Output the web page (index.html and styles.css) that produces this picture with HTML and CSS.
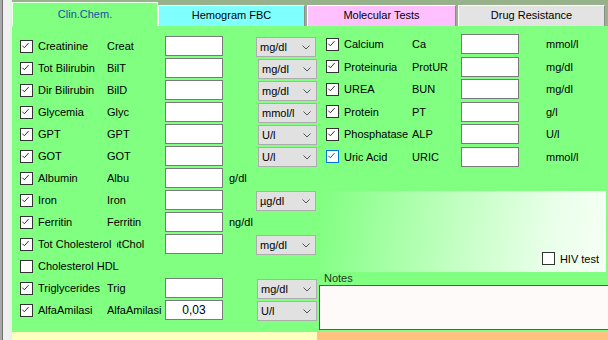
FILE: index.html
```html
<!DOCTYPE html>
<html lang="en">
<head>
    <meta charset="UTF-8">
    <meta name="viewport" content="width=device-width, initial-scale=1.0">
    <title>Clinical Chemistry</title>
    <link rel="stylesheet" href="styles.css">
</head>
<body>
    <div class="window">
        <div class="tabs">
            <div class="tab active">Clin.Chem.</div>
            <div class="tab hemo">Hemogram FBC</div>
            <div class="tab mol">Molecular Tests</div>
            <div class="tab drug">Drug Resistance</div>
        </div>

        <div class="panel">
            <!-- left column of tests -->
            <div class="col-left">
                <div class="row">
                    <label class="chk"><span class="cb"><svg viewBox="0 0 13 13"><polyline points="2.5,6.5 5,9 10,3.5"/></svg></span>Creatinine</label>
                    <span class="abbr">Creat</span>
                    <input class="box" type="text">
                    <div class="combo c33"><span>mg/dl</span><svg viewBox="0 0 8 5"><polyline points="0.5,0.5 4,4 7.5,0.5"/></svg></div>
                </div>
                <div class="row">
                    <label class="chk"><span class="cb"><svg viewBox="0 0 13 13"><polyline points="2.5,6.5 5,9 10,3.5"/></svg></span>Tot Bilirubin</label>
                    <span class="abbr">BilT</span>
                    <input class="box" type="text">
                    <div class="combo c35"><span>mg/dl</span><svg viewBox="0 0 8 5"><polyline points="0.5,0.5 4,4 7.5,0.5"/></svg></div>
                </div>
                <div class="row">
                    <label class="chk"><span class="cb"><svg viewBox="0 0 13 13"><polyline points="2.5,6.5 5,9 10,3.5"/></svg></span>Dir Bilirubin</label>
                    <span class="abbr">BilD</span>
                    <input class="box" type="text">
                    <div class="combo c35"><span>mg/dl</span><svg viewBox="0 0 8 5"><polyline points="0.5,0.5 4,4 7.5,0.5"/></svg></div>
                </div>
                <div class="row">
                    <label class="chk"><span class="cb"><svg viewBox="0 0 13 13"><polyline points="2.5,6.5 5,9 10,3.5"/></svg></span>Glycemia</label>
                    <span class="abbr">Glyc</span>
                    <input class="box" type="text">
                    <div class="combo c35"><span>mmol/l</span><svg viewBox="0 0 8 5"><polyline points="0.5,0.5 4,4 7.5,0.5"/></svg></div>
                </div>
                <div class="row">
                    <label class="chk"><span class="cb"><svg viewBox="0 0 13 13"><polyline points="2.5,6.5 5,9 10,3.5"/></svg></span>GPT</label>
                    <span class="abbr">GPT</span>
                    <input class="box" type="text">
                    <div class="combo c35"><span>U/l</span><svg viewBox="0 0 8 5"><polyline points="0.5,0.5 4,4 7.5,0.5"/></svg></div>
                </div>
                <div class="row">
                    <label class="chk"><span class="cb"><svg viewBox="0 0 13 13"><polyline points="2.5,6.5 5,9 10,3.5"/></svg></span>GOT</label>
                    <span class="abbr">GOT</span>
                    <input class="box" type="text">
                    <div class="combo c35"><span>U/l</span><svg viewBox="0 0 8 5"><polyline points="0.5,0.5 4,4 7.5,0.5"/></svg></div>
                </div>
                <div class="row">
                    <label class="chk"><span class="cb"><svg viewBox="0 0 13 13"><polyline points="2.5,6.5 5,9 10,3.5"/></svg></span>Albumin</label>
                    <span class="abbr">Albu</span>
                    <input class="box" type="text">
                    <span class="unit">g/dl</span>
                </div>
                <div class="row">
                    <label class="chk"><span class="cb"><svg viewBox="0 0 13 13"><polyline points="2.5,6.5 5,9 10,3.5"/></svg></span>Iron</label>
                    <span class="abbr">Iron</span>
                    <input class="box" type="text">
                    <div class="combo c33"><span>µg/dl</span><svg viewBox="0 0 8 5"><polyline points="0.5,0.5 4,4 7.5,0.5"/></svg></div>
                </div>
                <div class="row">
                    <label class="chk"><span class="cb"><svg viewBox="0 0 13 13"><polyline points="2.5,6.5 5,9 10,3.5"/></svg></span>Ferritin</label>
                    <span class="abbr">Ferritin</span>
                    <input class="box" type="text">
                    <span class="unit">ng/dl</span>
                </div>
                <div class="row">
                    <label class="chk"><span class="cb"><svg viewBox="0 0 13 13"><polyline points="2.5,6.5 5,9 10,3.5"/></svg></span>Tot Cholesterol</label>
                    <span class="abbr hidden-start">TotChol</span>
                    <input class="box" type="text">
                    <div class="combo c33"><span>mg/dl</span><svg viewBox="0 0 8 5"><polyline points="0.5,0.5 4,4 7.5,0.5"/></svg></div>
                </div>
                <div class="row">
                    <label class="chk wide"><span class="cb"></span>Cholesterol HDL</label>
                </div>
                <div class="row">
                    <label class="chk"><span class="cb"><svg viewBox="0 0 13 13"><polyline points="2.5,6.5 5,9 10,3.5"/></svg></span>Triglycerides</label>
                    <span class="abbr">Trig</span>
                    <input class="box" type="text">
                    <div class="combo c34"><span>mg/dl</span><svg viewBox="0 0 8 5"><polyline points="0.5,0.5 4,4 7.5,0.5"/></svg></div>
                </div>
                <div class="row">
                    <label class="chk"><span class="cb"><svg viewBox="0 0 13 13"><polyline points="2.5,6.5 5,9 10,3.5"/></svg></span>AlfaAmilasi</label>
                    <span class="abbr">AlfaAmilasi</span>
                    <input class="box" type="text" value="0,03">
                    <div class="combo c34"><span>U/l</span><svg viewBox="0 0 8 5"><polyline points="0.5,0.5 4,4 7.5,0.5"/></svg></div>
                </div>
            </div>

            <!-- right column -->
            <div class="col-right">
                <div class="rows-right">
                    <div class="row-r">
                        <label class="chk"><span class="cb"><svg viewBox="0 0 13 13"><polyline points="2.5,6.5 5,9 10,3.5"/></svg></span>Calcium</label>
                        <span class="abbr">Ca</span>
                        <input class="box" type="text">
                        <span class="unit-r">mmol/l</span>
                    </div>
                    <div class="row-r">
                        <label class="chk"><span class="cb"><svg viewBox="0 0 13 13"><polyline points="2.5,6.5 5,9 10,3.5"/></svg></span>Proteinuria</label>
                        <span class="abbr">ProtUR</span>
                        <input class="box" type="text">
                        <span class="unit-r">mg/dl</span>
                    </div>
                    <div class="row-r">
                        <label class="chk"><span class="cb"><svg viewBox="0 0 13 13"><polyline points="2.5,6.5 5,9 10,3.5"/></svg></span>UREA</label>
                        <span class="abbr">BUN</span>
                        <input class="box" type="text">
                        <span class="unit-r">mg/dl</span>
                    </div>
                    <div class="row-r">
                        <label class="chk"><span class="cb"><svg viewBox="0 0 13 13"><polyline points="2.5,6.5 5,9 10,3.5"/></svg></span>Protein</label>
                        <span class="abbr">PT</span>
                        <input class="box" type="text">
                        <span class="unit-r">g/l</span>
                    </div>
                    <div class="row-r">
                        <label class="chk"><span class="cb"><svg viewBox="0 0 13 13"><polyline points="2.5,6.5 5,9 10,3.5"/></svg></span>Phosphatase</label>
                        <span class="abbr">ALP</span>
                        <input class="box" type="text">
                        <span class="unit-r">U/l</span>
                    </div>
                    <div class="row-r">
                        <label class="chk"><span class="cb focus"><svg viewBox="0 0 13 13"><polyline points="2.5,6.5 5,9 10,3.5"/></svg></span>Uric Acid</label>
                        <span class="abbr">URIC</span>
                        <input class="box" type="text">
                        <span class="unit-r">mmol/l</span>
                    </div>
                </div>

                <div class="hiv">
                    <label class="chk"><span class="cb"></span>HIV test</label>
                </div>

                <div class="notes-label">Notes</div>
                <textarea class="notes"></textarea>
            </div>
        </div>

        <div class="status">
            <div class="status-yellow"></div>
            <div class="status-orange"></div>
        </div>
    </div>
</body>
</html>
```

FILE: styles.css
```css
html, body {
    height: 340px;
    overflow: hidden;
}
body {
    margin: 0;
    padding-left: 12px;
    background: linear-gradient(to right, #a9a9a9 0 2px, #707070 2px 3px, #f0f0f0 3px 10px, #e2f4e2 10px);
    font-family: "Liberation Sans", Arial, sans-serif;
    font-size: 11px;
    color: #000;
}
.window {
    display: flex;
    flex-direction: column;
    height: 340px;
}

/* tabs */
.tabs {
    display: flex;
    height: 26px;
    background: #97b28b;
}
.tab {
    box-sizing: border-box;
    height: 21px;
    margin-top: 5px;
    width: 147px;
    line-height: 19px;
    text-align: center;
    border: 1px solid;
    border-color: #ffffff #8c8c8c transparent #ffffff;
    border-bottom: none;
}
.tab.active {
    width: 146px;
    height: 24px;
    margin-top: 2px;
    line-height: 23px;
    background: #80ff80;
    color: #1a4fa0;
    border-color: #e8ffe8 #ffffff transparent #e8ffe8;
}
.tab.hemo {
    background: #80ffff;
}
.tab.mol {
    width: 149px;
    margin-left: 2px;
    background: #ffc0ff;
}
.tab.drug {
    margin-left: 2px;
    background: #e3e3e3;
}

/* main panel */
.panel {
    display: grid;
    grid-template-columns: 308px 1fr;
    height: 306px;
    background: #80ff80;
}
.col-left {
    padding: 9px 0 0 8px;
}
.row {
    display: grid;
    grid-template-columns: 87px 58px 58px auto;
    align-items: center;
    height: 22px;
}
.col-right {
    display: flex;
    flex-direction: column;
    padding-top: 7px;
}
.rows-right {
    padding-left: 6px;
}
.row-r {
    display: grid;
    grid-template-columns: 86px 49px 58px auto;
    align-items: center;
    height: 22.5px;
}

/* checkboxes */
.chk {
    display: flex;
    align-items: center;
    gap: 5px;
    white-space: nowrap;
}
.chk.wide {
    width: max-content;
}
.cb {
    box-sizing: border-box;
    width: 13px;
    height: 13px;
    flex: none;
    background: #fff;
    border: 1px solid #333;
}
.cb svg {
    display: block;
    width: 11px;
    height: 11px;
    margin: 0;
}
.cb svg polyline {
    fill: none;
    stroke: #222;
    stroke-width: 1.1;
    transform: translate(-1px, -1px);
}
.cb.focus {
    border-color: #0078d7;
}
.cb.focus svg polyline {
    stroke: #0a4f9a;
}

.abbr {
    white-space: nowrap;
    overflow: hidden;
}
/* label of the checkbox to the left covers the start of this one */
.abbr.hidden-start {
    margin-left: 10px;
    text-indent: -10px;
}
.box {
    box-sizing: border-box;
    width: 58px;
    height: 20px;
    margin: 0;
    padding: 0;
    border: 1px solid #7a7a7a;
    background: #fff;
    font: inherit;
    font-size: 12px;
    text-align: center;
}
.unit {
    margin-left: 6px;
}
.unit-r {
    margin-left: 27px;
}

/* unit combo boxes */
.combo {
    box-sizing: border-box;
    width: 60px;
    height: 20px;
    margin-top: 2px;
    display: flex;
    align-items: center;
    justify-content: space-between;
    padding: 0 5px 0 3px;
    background: #e1e1e1;
    border: 1px solid #adadad;
}
.combo svg {
    width: 8px;
    height: 5px;
}
.combo svg polyline {
    fill: none;
    stroke: #555;
    stroke-width: 1;
}
.c33 { margin-left: 33px; }
.c34 { margin-left: 34px; }
.c35 { margin-left: 35px; width: 59px; }

/* HIV / notes area */
.hiv {
    margin-top: 23px;
    margin-right: 2px;
    height: 81px;
    box-sizing: border-box;
    display: flex;
    align-items: flex-end;
    justify-content: flex-end;
    padding: 0 7px 7px 0;
    background: linear-gradient(100deg, #80ff80 0%, #a8ffa8 28%, #ccffcc 55%, #eaffea 80%, #f6fff6 100%);
}
.notes-label {
    height: 13px;
    line-height: 13px;
    padding-left: 4px;
    color: #1e3a1e;
}
.notes {
    box-sizing: border-box;
    height: 45px;
    margin: 0 0 0 -1px;
    border: 1px solid #46664a;
    border-right: none;
    background: #fffafa;
    resize: none;
    font: inherit;
}

.status {
    display: flex;
    height: 8px;
}
.status-yellow {
    width: 305px;
    background: #ffffc0;
}
.status-orange {
    flex: 1;
    background: #ffc080;
}
```
